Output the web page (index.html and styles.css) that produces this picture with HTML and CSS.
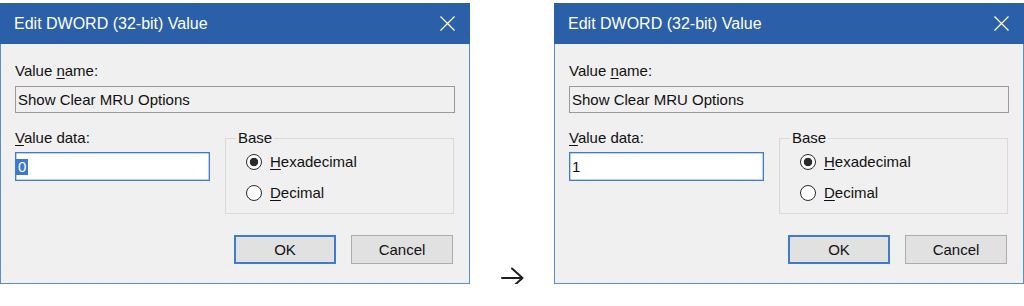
FILE: index.html
```html
<!DOCTYPE html>
<html lang="en">
<head>
<meta charset="utf-8">
<title>Edit DWORD (32-bit) Value</title>
<link rel="stylesheet" href="styles.css">
</head>
<body>
<div class="stage">
  <section class="dialog">
    <header class="titlebar">
      <span class="title">Edit DWORD (32-bit) Value</span>
      <svg class="close" width="15" height="15" viewBox="0 0 15 15"><path d="M0.5 0.5 L14.5 14.5 M14.5 0.5 L0.5 14.5" stroke="#fff" stroke-width="1.3" fill="none"/></svg>
    </header>
    <div class="content">
      <div class="label">Value <u>n</u>ame:</div>
      <div class="namebox">Show Clear MRU Options</div>
      <div class="row">
        <div class="datacol">
          <div class="label"><u>V</u>alue data:</div>
          <div class="databox"><span class="val sel">0</span></div>
        </div>
        <fieldset class="base">
          <legend>Base</legend>
          <div class="radio"><span class="dot checked"></span><span><u>H</u>exadecimal</span></div>
          <div class="radio"><span class="dot"></span><span><u>D</u>ecimal</span></div>
        </fieldset>
      </div>
      <div class="buttons">
        <div class="btn default">OK</div>
        <div class="btn">Cancel</div>
      </div>
    </div>
  </section>

  <div class="arrowcol">
    <svg class="arrow" width="23" height="22" viewBox="0 0 23 22"><path d="M1 11 H21.5 M11 1.5 L21.5 11 L11 20.5" stroke="#1e1e1e" stroke-width="2" fill="none" stroke-linecap="round" stroke-linejoin="round"/></svg>
  </div>

  <section class="dialog">
    <header class="titlebar">
      <span class="title">Edit DWORD (32-bit) Value</span>
      <svg class="close" width="15" height="15" viewBox="0 0 15 15"><path d="M0.5 0.5 L14.5 14.5 M14.5 0.5 L0.5 14.5" stroke="#fff" stroke-width="1.3" fill="none"/></svg>
    </header>
    <div class="content">
      <div class="label">Value <u>n</u>ame:</div>
      <div class="namebox">Show Clear MRU Options</div>
      <div class="row">
        <div class="datacol">
          <div class="label"><u>V</u>alue data:</div>
          <div class="databox"><span class="val">1</span></div>
        </div>
        <fieldset class="base">
          <legend>Base</legend>
          <div class="radio"><span class="dot checked"></span><span><u>H</u>exadecimal</span></div>
          <div class="radio"><span class="dot"></span><span><u>D</u>ecimal</span></div>
        </fieldset>
      </div>
      <div class="buttons">
        <div class="btn default">OK</div>
        <div class="btn">Cancel</div>
      </div>
    </div>
  </section>
</div>
</body>
</html>
```

FILE: styles.css
```css
html, body {
  margin: 0;
  padding: 0;
  background: #ffffff;
}

body {
  font-family: "Liberation Sans", Arial, sans-serif;
  font-size: 15px;
  line-height: 18px;
  color: #111;
}

.stage {
  display: flex;
  align-items: stretch;
  padding-top: 3px;
}

.dialog {
  flex: 0 0 469px;
  height: 281px;
  box-sizing: border-box;
  background: #f0f0f0;
  border: 1px solid #5a8ed0;
  border-top: none;
  display: flex;
  flex-direction: column;
}

.titlebar {
  height: 41px;
  flex: 0 0 41px;
  background: #2b5fa8;
  color: #ffffff;
  display: flex;
  align-items: center;
  justify-content: space-between;
  padding: 0 15px 0 14px;
  margin: 0 -1px;
}

.title {
  font-size: 16px;
  line-height: 20px;
}

.close {
  display: block;
}

.content {
  padding: 18px 14px 0 14px;
  display: flex;
  flex-direction: column;
}

.label {
  height: 18px;
}

u {
  text-decoration-thickness: 1px;
  text-underline-offset: 2px;
}

.namebox {
  margin-top: 6px;
  height: 27px;
  box-sizing: border-box;
  width: 440px;
  border: 1px solid #9a9a9a;
  background: #f0f0f0;
  padding-left: 2px;
  display: flex;
  align-items: center;
}

.row {
  margin-top: 16px;
  display: flex;
  justify-content: space-between;
  align-items: flex-start;
}

.datacol {
  display: flex;
  flex-direction: column;
}

.databox {
  margin-top: 5px;
  width: 195px;
  height: 29px;
  box-sizing: border-box;
  border: 1px solid #3f7cce;
  box-shadow: inset 0 0 0 0.5px #7aa5dd;
  background: #ffffff;
  display: flex;
  align-items: center;
}

.val {
  display: inline-block;
  padding: 0 2px;
  line-height: 16px;
}

.sel {
  background: #3a78d2;
  color: #ffffff;
}

.base {
  margin: 0 1px 0 0;
  width: 229px;
  box-sizing: border-box;
  min-width: 0;
  border: 1px solid #d9d9d9;
  padding: 5px 0 10px 10px;
  display: flex;
  flex-direction: column;
  gap: 11px;
}

.base legend {
  padding: 0 2px;
  line-height: 18px;
}

.radio {
  height: 20px;
  padding-left: 10px;
  display: flex;
  align-items: center;
  gap: 8px;
}

.dot {
  width: 16px;
  height: 16px;
  box-sizing: border-box;
  border: 1.5px solid #2a2a2a;
  border-radius: 50%;
  background: #ffffff;
}

.dot.checked {
  background: radial-gradient(circle, #2a2a2a 0, #2a2a2a 3.8px, #ffffff 4.6px);
}

.buttons {
  margin-top: 21px;
  margin-right: 2px;
  display: flex;
  justify-content: flex-end;
  gap: 15px;
}

.btn {
  width: 102px;
  height: 29px;
  box-sizing: border-box;
  border: 1px solid #adadad;
  background: #e1e1e1;
  display: flex;
  align-items: center;
  justify-content: center;
}

.btn.default {
  border: 2px solid #3f7cce;
}

.arrowcol {
  flex: 0 0 84px;
  display: flex;
  align-items: flex-end;
  justify-content: center;
}

.arrow {
  display: block;
  margin-bottom: -5px;
}
```
